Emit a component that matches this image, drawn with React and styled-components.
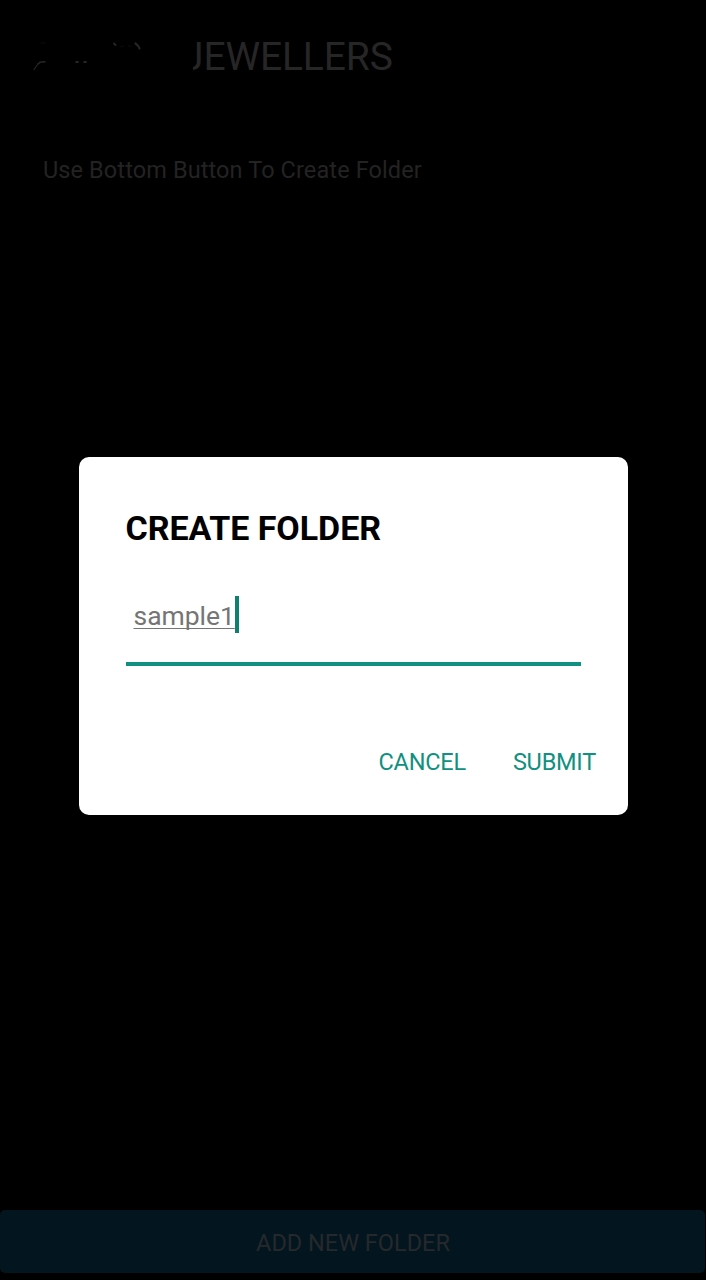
import React from "react";
import styled, { createGlobalStyle } from "styled-components";

const GlobalStyle = createGlobalStyle`
  *, *::before, *::after { box-sizing: border-box; }
  body { margin: 0; background: #000; font-family: Roboto, "Liberation Sans", sans-serif; }
`;

const Screen = styled.div`
  position: relative;
  display: flex;
  flex-direction: column;
  width: 706px;
  height: 1280px;
  overflow: hidden;
  background: #000;
`;

const Header = styled.header`
  display: flex;
  align-items: center;
  height: 112px;
`;

const Mask = styled.div`
  z-index: 1;
  flex: none;
  width: 193px;
  height: 112px;
  background: #000;
`;

const Marks = styled.svg`
  display: block;
  fill: none;
  stroke: #252525;
  stroke-linecap: round;
`;

const Title = styled.h1`
  margin: 2px 0 0 -11px;
  font-size: 39px;
  line-height: 46px;
  font-weight: 400;
  letter-spacing: -0.12px;
  color: #262626;
  white-space: nowrap;
`;

const Content = styled.main`
  flex: 1;
  padding: 44px 43px 0;
`;

const Hint = styled.p`
  margin: 0;
  font-size: 23.5px;
  line-height: 28px;
  letter-spacing: 0.11px;
  color: #232323;
  white-space: nowrap;
`;

const AddButton = styled.button`
  height: 63px;
  margin: 0 1px 7px 0;
  padding: 2px 0 0 1px;
  border: 0;
  border-radius: 5px;
  background: #03151f;
  color: #26292b;
  font: 400 23.5px/28px Roboto, "Liberation Sans", sans-serif;
`;

const Overlay = styled.div`
  position: absolute;
  inset: 0;
  z-index: 2;
  padding: 457px 78.5px 0;
`;

const Dialog = styled.section`
  display: flex;
  flex-direction: column;
  height: 358px;
  padding: 51px 31.5px 0 47px;
  border-radius: 10px;
  background: #fff;
`;

const DialogTitle = styled.h2`
  margin: 0;
  font-size: 34px;
  line-height: 40px;
  font-weight: 700;
  letter-spacing: -0.05px;
  color: #000;
  white-space: nowrap;
`;

const Field = styled.div`
  display: flex;
  align-items: flex-start;
  width: 455px;
  height: 78px;
  margin-top: 40px;
  padding: 8px 8px 0;
  border-bottom: 4px solid #0f9080;
`;

const Value = styled.span`
  margin-top: 4px;
  font-size: 26.5px;
  line-height: 32px;
  letter-spacing: -0.05px;
  color: #757575;
  text-decoration: underline;
  text-decoration-thickness: 1px;
  text-underline-offset: 3px;
  text-decoration-skip-ink: none;
`;

const Caret = styled.i`
  width: 4px;
  height: 37px;
  background: #0f8070;
`;

const Actions = styled.div`
  display: flex;
  justify-content: flex-end;
  gap: 47px;
  margin-top: 82px;
`;

const Action = styled.button`
  padding: 0;
  border: 0;
  background: none;
  color: #0f9080;
  font: 400 23.5px/28px Roboto, "Liberation Sans", sans-serif;
  letter-spacing: -0.22px;
`;

export default function App() {
  return (
    <>
      <GlobalStyle />
      <Screen>
        <Header>
          <Mask>
            <Marks width="193" height="112" viewBox="0 0 193 112">
              <path d="M34 69.5L38 64" strokeWidth="1.2" />
              <path d="M38 64L40 62.3L45 61.8" strokeWidth="1.6" />
              <path d="M76.2 62h1.8M84.2 62h1.8" strokeWidth="2" />
              <path d="M114 43.5l1.5 1.5" strokeWidth="2" />
              <path d="M135.5 43.5q3 2 4 5" strokeWidth="2.2" />
              <path d="M41 43h4M120 47l4-1M128 46h3" strokeWidth="1" stroke="#0c0c0c" />
            </Marks>
          </Mask>
          <Title>JEWELLERS</Title>
        </Header>
        <Content>
          <Hint>Use Bottom Button To Create Folder</Hint>
        </Content>
        <AddButton type="button">ADD NEW FOLDER</AddButton>
        <Overlay>
          <Dialog role="dialog" aria-label="CREATE FOLDER">
            <DialogTitle>CREATE FOLDER</DialogTitle>
            <Field>
              <Value>sample1</Value>
              <Caret />
            </Field>
            <Actions>
              <Action type="button">CANCEL</Action>
              <Action type="button">SUBMIT</Action>
            </Actions>
          </Dialog>
        </Overlay>
      </Screen>
    </>
  );
}
